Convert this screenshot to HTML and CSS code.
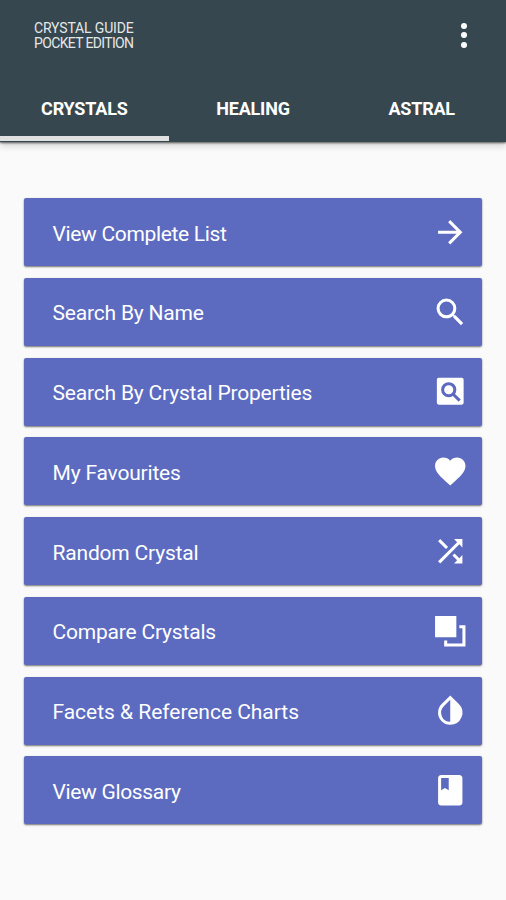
FILE: index.html
```html
<!DOCTYPE html>
<html lang="en">
<head>
<meta charset="utf-8">
<meta name="viewport" content="width=device-width">
<title>Crystal Guide Pocket Edition</title>
<link rel="stylesheet" href="styles.css">
</head>
<body>
<header class="app-bar">
  <div class="toolbar">
    <h1 class="brand"><span class="brand-top">CRYSTAL GUIDE</span><span class="brand-bottom">POCKET EDITION</span></h1>
    <button class="overflow" aria-label="More options"><i></i><i></i><i></i></button>
  </div>
  <nav class="tabs">
    <a class="tab active">CRYSTALS</a>
    <a class="tab">HEALING</a>
    <a class="tab">ASTRAL</a>
  </nav>
</header>
<main class="menu">
  <a class="item tight"><span>View Complete List</span><svg class="icon" viewBox="0 0 24 24"><path d="M12 4l-1.41 1.41L16.17 11H4v2h12.17l-5.58 5.59L12 20l8-8z"/></svg></a>
  <a class="item"><span>Search By Name</span><svg class="icon" viewBox="0 0 24 24"><path d="M15.5 14h-.79l-.28-.27A6.47 6.47 0 0 0 16 9.5 6.5 6.5 0 1 0 9.5 16c1.61 0 3.09-.59 4.23-1.57l.27.28v.79l5 4.99L20.49 19l-4.99-5zm-6 0a4.5 4.5 0 1 1 0-9 4.5 4.5 0 0 1 0 9z"/></svg></a>
  <a class="item"><span>Search By Crystal Properties</span><svg class="icon" viewBox="0 0 24 24"><rect x="3.2" y="3.2" width="17.6" height="17.6" rx="1.2"/><g class="cutout"><circle cx="11" cy="11" r="4"/><path d="M13.8 13.8l4.4 4.4"/></g></svg></a>
  <a class="item"><span>My Favourites</span><svg class="icon" viewBox="0 0 24 24"><path d="M12 21.35l-1.45-1.32C5.4 15.36 2 12.28 2 8.5 2 5.42 4.42 3 7.5 3c1.74 0 3.41.81 4.5 2.09C13.09 3.81 14.76 3 16.5 3 19.58 3 22 5.42 22 8.5c0 3.78-3.4 6.86-8.55 11.54z"/></svg></a>
  <a class="item"><span>Random Crystal</span><svg class="icon" viewBox="0 0 24 24"><path d="M10.59 9.17L5.41 4 4 5.41l5.17 5.17zM14.5 4l2.04 2.04L4 18.59 5.41 20 17.96 7.46 20 9.5V4zm.33 9.41l-1.41 1.41 3.13 3.13L14.5 20H20v-5.5l-2.04 2.04z"/></svg></a>
  <a class="item"><span>Compare Crystals</span><svg class="icon" viewBox="0 0 24 24"><path d="M2 2h14v14H2zM18 8h4v14H8v-4h2v2h10V10h-2z"/></svg></a>
  <a class="item loose"><span>Facets &amp; Reference Charts</span><svg class="icon" viewBox="0 0 24 24"><path d="M17.66 7.93L12 2.27 6.34 7.93a8 8 0 0 0 0 11.31A7.98 7.98 0 0 0 12 21.58a8 8 0 0 0 5.66-13.65zM12 19.59a6 6 0 0 1-4.24-10.25L12 5.1z"/></svg></a>
  <a class="item tight"><span>View Glossary</span><svg class="icon" viewBox="0 0 24 24"><path d="M18 2H6c-1.1 0-2 .9-2 2v16c0 1.1.9 2 2 2h12c1.1 0 2-.9 2-2V4c0-1.1-.9-2-2-2zM6 4h5v8l-2.5-1.5L6 12z"/></svg></a>
</main>
</body>
</html>
```
FILE: styles.css
```css
* { box-sizing: border-box; }
body {
  margin: 0;
  min-height: 900px;
  background: #fafafa;
  color: #fff;
  font-family: Roboto, "Liberation Sans", sans-serif;
}
.app-bar {
  height: 142px;
  background: #37474f;
  box-shadow: 0 1px 2px rgba(0,0,0,.6), 0 4px 7px rgba(0,0,0,.16);
}
.toolbar {
  display: flex;
  justify-content: space-between;
  height: 76px;
  padding: 21px 35px 0 34px;
}
.brand {
  display: flex;
  flex-direction: column;
  margin: 0;
  font-size: 14px;
  font-weight: 400;
  line-height: 15px;
  color: #e4e7e8;
  white-space: nowrap;
}
.brand-top { letter-spacing: -.15px; }
.brand-bottom { letter-spacing: -.65px; }
.overflow {
  display: flex;
  flex-direction: column;
  gap: 3.3px;
  width: 14px;
  padding: 2px 4px;
  border: 0;
  background: none;
}
.overflow i {
  width: 6px;
  height: 6px;
  border-radius: 50%;
  background: #fff;
}
.tabs {
  display: grid;
  grid-template-columns: repeat(3, 1fr);
  height: 65px;
}
.tab {
  padding-top: 21px;
  font-size: 18px;
  font-weight: 700;
  line-height: 24px;
  letter-spacing: -.2px;
  text-align: center;
  border-bottom: 5px solid transparent;
}
.active { border-color: #e0e0e0; }
.menu {
  display: flex;
  flex-direction: column;
  gap: 11.75px;
  padding: 56px 24px 0;
}
.item {
  display: flex;
  align-items: center;
  justify-content: space-between;
  height: 68px;
  padding: 3px 13.5px 0 28.5px;
  border-radius: 2px;
  background: #5c6bc0;
  box-shadow: 0 1px 2px rgba(0,0,0,.55);
  font-size: 21px;
  letter-spacing: -.19px;
  white-space: nowrap;
}
.tight { letter-spacing: -.33px; }
.loose { letter-spacing: -.03px; }
.icon {
  width: 36.5px;
  height: 36.5px;
  margin-top: -3px;
  fill: #fff;
}
.cutout {
  fill: none;
  stroke: #5c6bc0;
  stroke-width: 2;
}
```
